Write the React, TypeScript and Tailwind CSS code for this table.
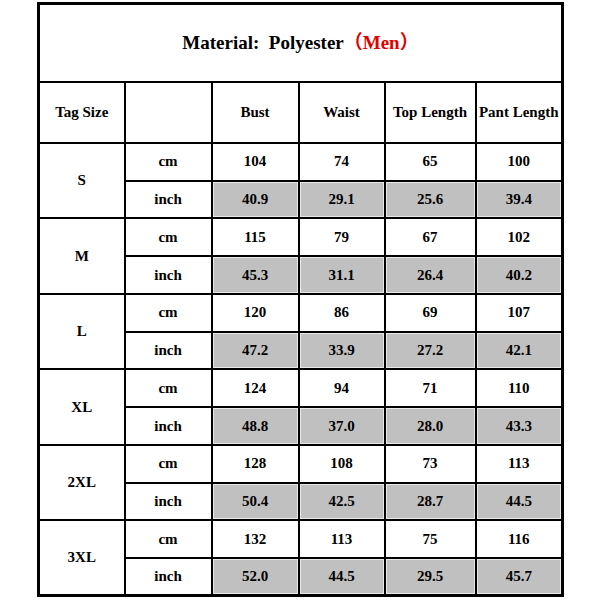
import React from "react";

type Row = { size: string; cm: string[]; inch: string[] };

const rows: Row[] = [
  { size: "S", cm: ["104", "74", "65", "100"], inch: ["40.9", "29.1", "25.6", "39.4"] },
  { size: "M", cm: ["115", "79", "67", "102"], inch: ["45.3", "31.1", "26.4", "40.2"] },
  { size: "L", cm: ["120", "86", "69", "107"], inch: ["47.2", "33.9", "27.2", "42.1"] },
  { size: "XL", cm: ["124", "94", "71", "110"], inch: ["48.8", "37.0", "28.0", "43.3"] },
  { size: "2XL", cm: ["128", "108", "73", "113"], inch: ["50.4", "42.5", "28.7", "44.5"] },
  { size: "3XL", cm: ["132", "113", "75", "116"], inch: ["52.0", "44.5", "29.5", "45.7"] },
];

const cell = "border-2 border-black text-center align-middle p-0";

export default function App() {
  return (
    <div className="w-[600px] h-[600px] bg-white pl-[37px] pt-[2px] font-['Liberation_Serif','Times_New_Roman',serif] text-black">
      <table className="table-fixed border-collapse border-[3px] border-black w-[524px]">
        <colgroup>
          <col className="w-[86px]" />
          <col className="w-[87px]" />
          <col className="w-[87px]" />
          <col className="w-[86px]" />
          <col className="w-[91px]" />
          <col className="w-[87px]" />
        </colgroup>
        <tbody>
          <tr className="h-[78px]">
            <td colSpan={6} className={`${cell} text-[19px] font-bold`}>
              Material:&nbsp; Polyester
              <span className="text-[#e00000] font-['Liberation_Serif','Noto_Sans_CJK_SC',serif]">（Men）</span>
            </td>
          </tr>
          <tr className="h-[61px] text-[15px] font-bold">
            <td className={cell}>Tag Size</td>
            <td className={cell}></td>
            <td className={cell}>Bust</td>
            <td className={cell}>Waist</td>
            <td className={`${cell} whitespace-nowrap`}>Top Length</td>
            <td className={`${cell} whitespace-nowrap`}>Pant Length</td>
          </tr>
          {rows.map((r) => (
            <React.Fragment key={r.size}>
              <tr className="h-[38px] text-[15px] font-bold">
                <td rowSpan={2} className={cell}>{r.size}</td>
                <td className={cell}>cm</td>
                {r.cm.map((v, i) => (
                  <td key={i} className={cell}>{v}</td>
                ))}
              </tr>
              <tr className="h-[37.5px] text-[15px] font-bold">
                <td className={cell}>inch</td>
                {r.inch.map((v, i) => (
                  <td key={i} className={`${cell} bg-[#c0c0c0] shadow-[inset_0_0_0_1px_#e8e8e8]`}>{v}</td>
                ))}
              </tr>
            </React.Fragment>
          ))}
        </tbody>
      </table>
    </div>
  );
}
